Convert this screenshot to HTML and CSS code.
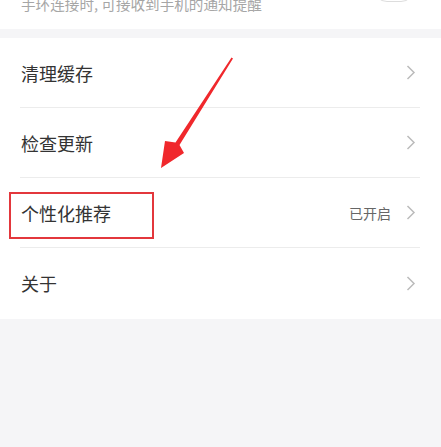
FILE: index.html
```html
<!DOCTYPE html>
<html lang="zh-CN">
<head>
    <meta charset="UTF-8">
    <meta name="viewport" content="width=device-width, initial-scale=1.0">
    <title>设置</title>
    <link rel="stylesheet" href="styles.css">
</head>
<body>
    <div class="page">
        <div class="notify">
            <p class="notify-desc">手环连接时, 可接收到手机的通知提醒</p>
            <div class="switch"></div>
        </div>

        <ul class="menu">
            <li class="menu-item">
                <div class="menu-inner">
                    <span class="menu-title">清理缓存</span>
                    <svg class="chevron" width="10" height="15" viewBox="0 0 10 15"><polyline points="1.5,1 8,7.5 1.5,14" fill="none" stroke="#bbb" stroke-width="1.5"/></svg>
                </div>
            </li>
            <li class="menu-item">
                <div class="menu-inner">
                    <span class="menu-title">检查更新</span>
                    <svg class="chevron" width="10" height="15" viewBox="0 0 10 15"><polyline points="1.5,1 8,7.5 1.5,14" fill="none" stroke="#bbb" stroke-width="1.5"/></svg>
                </div>
            </li>
            <li class="menu-item">
                <div class="menu-inner">
                    <span class="menu-title">个性化推荐</span>
                    <span class="menu-value">已开启</span>
                    <svg class="chevron" width="10" height="15" viewBox="0 0 10 15"><polyline points="1.5,1 8,7.5 1.5,14" fill="none" stroke="#bbb" stroke-width="1.5"/></svg>
                </div>
                <div class="mark-box"></div>
            </li>
            <li class="menu-item last">
                <div class="menu-inner">
                    <span class="menu-title">关于</span>
                    <svg class="chevron" width="10" height="15" viewBox="0 0 10 15"><polyline points="1.5,1 8,7.5 1.5,14" fill="none" stroke="#bbb" stroke-width="1.5"/></svg>
                </div>
            </li>
        </ul>

        <!-- 标注箭头 -->
        <svg class="mark-arrow" width="441" height="447" viewBox="0 0 441 447">
            <polygon points="231.5,57.5 233,58.5 179.5,145 184,153 161,168 165,141 175.5,142.5" fill="#f0282c"/>
        </svg>
    </div>
</body>
</html>
```

FILE: styles.css
```css
/* 设置页 */
body {
    margin: 0;
    padding: 0;
    background-color: #f5f5f7;
    font-family: "Noto Sans CJK SC", "Noto Sans", sans-serif;
}
.page {
    position: relative;
    height: 447px;
    overflow: hidden;
}
.notify {
    height: 29px;
    background-color: #fff;
    display: flex;
    justify-content: space-between;
    padding: 0 26px 0 21px;
}
.notify-desc {
    margin: -6px 0 0 0;
    font-size: 14.6px;
    line-height: 20px;
    color: #a6a6a6;
}
.switch {
    width: 42px;
    height: 28px;
    margin-top: -26px;
    border: 1px solid #ddd;
    border-radius: 15px;
    box-sizing: border-box;
}
.menu {
    list-style: none;
    margin: 9px 0 0 0;
    padding: 0 0 1px 0;
    background-color: #fff;
}
.menu-item {
    position: relative;
    height: 70px;
    padding: 0 21px 0 20px;
}
.menu-inner {
    height: 70px;
    box-sizing: border-box;
    display: flex;
    align-items: center;
    border-bottom: 1px solid #ececec;
}
.menu-item.last .menu-inner {
    border-bottom: none;
}
.menu-title {
    flex: 1;
    padding-left: 1px;
    font-size: 18px;
    color: #333;
}
.menu-value {
    font-size: 14px;
    color: #666;
    margin-right: 15px;
}
.chevron {
    display: block;
    margin-right: 4px;
}
.mark-box {
    position: absolute;
    left: 9px;
    top: 14px;
    width: 145px;
    height: 47px;
    border: 2px solid #e3373c;
    box-sizing: border-box;
}
.mark-arrow {
    position: absolute;
    left: 0;
    top: 0;
}
```
